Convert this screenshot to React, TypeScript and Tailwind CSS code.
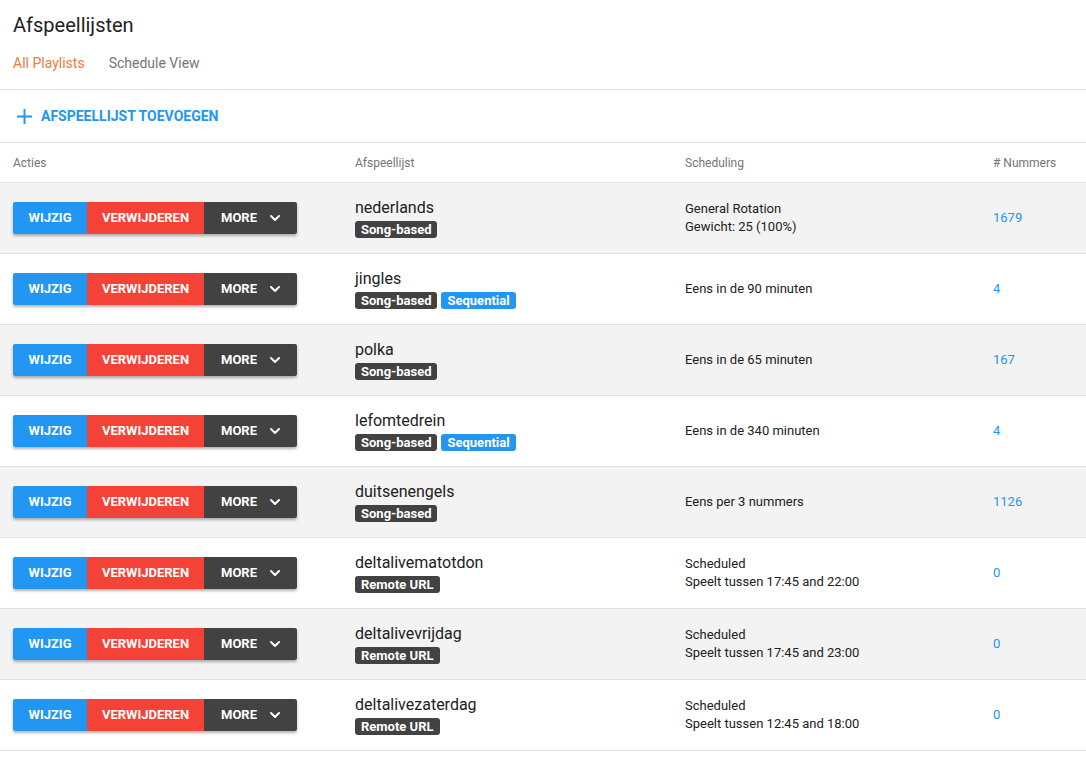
import { ChevronDown } from "lucide-react";

type Row = {
  name: string;
  badges: string[];
  sched: string[];
  count: string;
};

const rows: Row[] = [
  { name: "nederlands", badges: ["Song-based"], sched: ["General Rotation", "Gewicht: 25 (100%)"], count: "1679" },
  { name: "jingles", badges: ["Song-based", "Sequential"], sched: ["Eens in de 90 minuten"], count: "4" },
  { name: "polka", badges: ["Song-based"], sched: ["Eens in de 65 minuten"], count: "167" },
  { name: "lefomtedrein", badges: ["Song-based", "Sequential"], sched: ["Eens in de 340 minuten"], count: "4" },
  { name: "duitsenengels", badges: ["Song-based"], sched: ["Eens per 3 nummers"], count: "1126" },
  { name: "deltalivematotdon", badges: ["Remote URL"], sched: ["Scheduled", "Speelt tussen 17:45 and 22:00"], count: "0" },
  { name: "deltalivevrijdag", badges: ["Remote URL"], sched: ["Scheduled", "Speelt tussen 17:45 and 23:00"], count: "0" },
  { name: "deltalivezaterdag", badges: ["Remote URL"], sched: ["Scheduled", "Speelt tussen 12:45 and 18:00"], count: "0" },
];

function Badge({ label }: { label: string }) {
  const color = label === "Sequential" ? "bg-[#2196f3]" : "bg-[#424242]";
  return (
    <span className={`${color} text-white text-[13px] font-bold leading-[17px] h-[17px] px-[6px] rounded-[3px]`}>
      {label}
    </span>
  );
}

function Actions() {
  return (
    <div className="flex h-[32px] w-fit rounded-[2px] overflow-hidden shadow-[0_2px_3px_rgba(0,0,0,0.3)] text-white text-[13px] font-bold">
      <button className="bg-[#2196f3] w-[74px] flex items-center justify-center">WIJZIG</button>
      <button className="bg-[#f44336] w-[117px] flex items-center justify-center">VERWIJDEREN</button>
      <button className="bg-[#424242] w-[93px] flex items-center pl-[17px] gap-[10px]">
        MORE
        <ChevronDown size={16} strokeWidth={3} />
      </button>
    </div>
  );
}

export default function App() {
  return (
    <div className="bg-white min-h-screen font-['Roboto',sans-serif] text-[#212121]">
      <div className="px-[13px] pt-[11px]">
        <h1 className="text-[20px] leading-[28px]">Afspeellijsten</h1>
        <div className="flex gap-[24px] text-[14px] mt-[14px] h-[36px]">
          <span className="text-[#ee7b3c]">All Playlists</span>
          <span className="text-[#757575]">Schedule View</span>
        </div>
      </div>
      <div className="border-t border-[#e0e0e0] h-[53px] flex items-center pl-[17px]">
        <svg width="15" height="15" viewBox="0 0 15 15" className="text-[#2196f3]">
          <path d="M7.5 0v15M0 7.5h15" stroke="currentColor" strokeWidth="2" />
        </svg>
        <span className="ml-[9px] text-[#2196f3] text-[14px] font-bold">AFSPEELLIJST TOEVOEGEN</span>
      </div>
      <div className="grid grid-cols-[342px_330px_308px_1fr] h-[41px] border-y border-[#e0e0e0] items-center text-[12px] text-[#757575]">
        <div className="pl-[13px]">Acties</div>
        <div className="pl-[13px]">Afspeellijst</div>
        <div className="pl-[13px]">Scheduling</div>
        <div className="pl-[13px]"># Nummers</div>
      </div>
      {rows.map((r, i) => (
        <div
          key={r.name}
          className={`grid grid-cols-[342px_330px_308px_1fr] h-[71px] border-b border-[#e0e0e0] items-center ${i % 2 === 0 ? "bg-[#f3f3f3]" : "bg-white"}`}
        >
          <div className="pl-[13px]">
            <Actions />
          </div>
          <div className="pl-[13px] flex flex-col">
            <span className="text-[16px] leading-[20px]">{r.name}</span>
            <div className="flex gap-[4px] mt-[3px]">
              {r.badges.map((b) => (
                <Badge key={b} label={b} />
              ))}
            </div>
          </div>
          <div className="pl-[13px] text-[13px] leading-[18px] flex flex-col">
            {r.sched.map((s) => (
              <span key={s}>{s}</span>
            ))}
          </div>
          <div className="pl-[13px] text-[13px] text-[#2196f3]">{r.count}</div>
        </div>
      ))}
    </div>
  );
}
